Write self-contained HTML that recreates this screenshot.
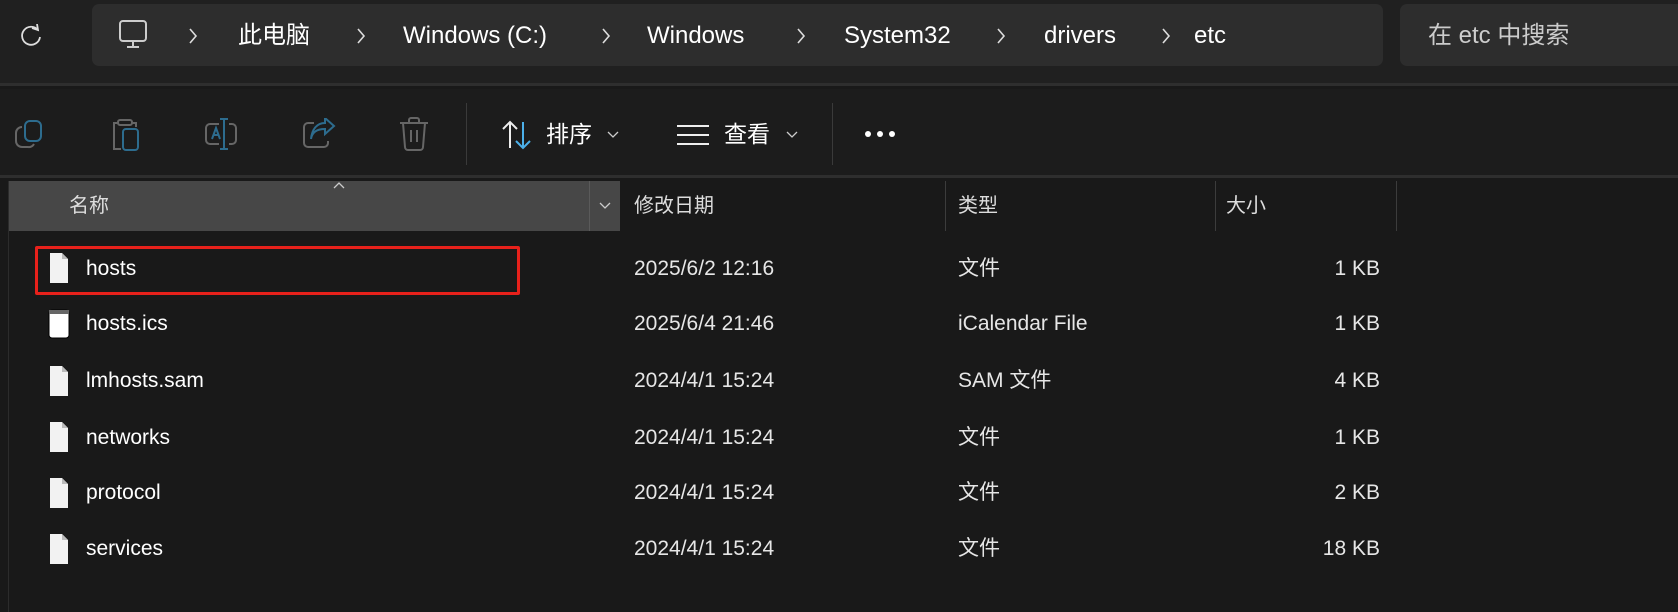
<!DOCTYPE html>
<html><head><meta charset="utf-8"><style>
*{margin:0;padding:0;box-sizing:border-box}
body{width:1678px;height:612px;overflow:hidden;background:#191919;font-family:"Segoe UI","Liberation Sans","Noto Sans CJK SC",sans-serif;color:#fff;position:relative}
.a{position:absolute;white-space:nowrap;line-height:30px}
.top{left:0;top:0;width:1678px;height:86px;background:#202020;border-bottom:3px solid #2e2e2e}
.addr{left:92px;top:4px;width:1291px;height:62px;background:#2d2d2d;border-radius:7px}
.search{left:1400px;top:4px;width:290px;height:62px;background:#2d2d2d;border-radius:7px}
.bc{font-size:24px;top:21px;color:#fff}
.tb{left:0;top:89px;width:1678px;height:89px;background:#1c1c1c;border-bottom:3px solid #2e2e2e}
.sep{width:1px;height:62px;top:103px;background:#3a3a3a}
.hdr{top:191px;font-size:20px;color:#ddd}
.vd{top:181px;width:1px;height:50px;background:#3c3c3c}
.row{font-size:21px;color:#fff}
.dt{font-size:21px;color:#e6e6e6}
</style></head><body>
<div class="a top"></div>
<svg class="a" style="left:18px;top:24px" width="26" height="26" viewBox="0 0 26 26"><path d="M20 6 A9 9 0 1 0 22 13" fill="none" stroke="#ddd" stroke-width="1.8"/><path d="M14 4 L20 6 L19 0" fill="none" stroke="#ddd" stroke-width="1.8"/></svg>
<div class="a addr"></div>
<svg class="a" style="left:118px;top:19px" width="30" height="32" viewBox="0 0 30 32"><rect x="2" y="2" width="26" height="20" rx="3" fill="none" stroke="#ccc" stroke-width="2"/><path d="M15 22v5M9 28h12" stroke="#ccc" stroke-width="2"/></svg>
<svg width="0" height="0" style="position:absolute"><defs>
<symbol id="c" viewBox="0 0 10 16"><path d="M2 1 L8 8 L2 15" fill="none" stroke="#ddd" stroke-width="1.6"/></symbol>
<symbol id="d" viewBox="0 0 12 8"><path d="M1 1 L6 6 L11 1" fill="none" stroke="#ccc" stroke-width="1.3"/></symbol>
<symbol id="f" viewBox="0 0 18 30"><path d="M0 0 h12 l6 6 v24 h-18z" fill="#f2f2f2"/><path d="M12 0 v6 h6" fill="#bbb"/></symbol>
</defs></svg>
<svg class="a" style="left:188px;top:28px" width="10" height="16"><use href="#c"/></svg>
<div class="a bc" style="left:238px">此电脑</div>
<svg class="a" style="left:356px;top:28px" width="10" height="16"><use href="#c"/></svg>
<div class="a bc" style="left:403px">Windows (C:)</div>
<svg class="a" style="left:601px;top:28px" width="10" height="16"><use href="#c"/></svg>
<div class="a bc" style="left:647px">Windows</div>
<svg class="a" style="left:796px;top:28px" width="10" height="16"><use href="#c"/></svg>
<div class="a bc" style="left:844px">System32</div>
<svg class="a" style="left:996px;top:28px" width="10" height="16"><use href="#c"/></svg>
<div class="a bc" style="left:1044px">drivers</div>
<svg class="a" style="left:1161px;top:28px" width="10" height="16"><use href="#c"/></svg>
<div class="a bc" style="left:1194px">etc</div>
<div class="a search"></div>
<div class="a bc" style="left:1428px;color:#ccc">在 etc 中搜索</div>
<div class="a tb"></div>
<svg class="a" style="left:14px;top:119px" width="32" height="32" viewBox="0 0 32 32"><path d="M8 8 A6 6 0 0 0 2 14 v8 a6 6 0 0 0 6 6 h6 a6 6 0 0 0 6-3" fill="none" stroke="#666" stroke-width="2"/><rect x="11" y="2" width="16" height="20" rx="5" fill="none" stroke="#2d6c8e" stroke-width="2"/></svg>
<svg class="a" style="left:110px;top:117px" width="32" height="36" viewBox="0 0 32 36"><path d="M8 6 H4 v26 h7 M22 6 h4 v4" fill="none" stroke="#666" stroke-width="2"/><rect x="8" y="3" width="14" height="5" rx="2" fill="none" stroke="#666" stroke-width="2"/><rect x="13" y="12" width="15" height="21" rx="3" fill="none" stroke="#2d6c8e" stroke-width="2"/></svg>
<svg class="a" style="left:204px;top:117px" width="34" height="34" viewBox="0 0 34 34"><path d="M15 7 H6 a4 4 0 0 0-4 4 v12 a4 4 0 0 0 4 4 h9 M25 7 h3 a4 4 0 0 1 4 4 v12 a4 4 0 0 1-4 4 h-3" fill="none" stroke="#666" stroke-width="2"/><path d="M20 2 v30 M16 2 h8 M16 32 h8 M8 22 l4-11 l4 11 M9.5 18 h5" fill="none" stroke="#2d6c8e" stroke-width="2"/></svg>
<svg class="a" style="left:302px;top:118px" width="34" height="32" viewBox="0 0 34 32"><path d="M12 5 H6 a4 4 0 0 0-4 4 v16 a4 4 0 0 0 4 4 h16 a4 4 0 0 0 4-4 v-2" fill="none" stroke="#666" stroke-width="2"/><path d="M9 21 c1-7 6-10 14-10 v5 l9-8 l-9-8 v5 c-8 0-13 6-14 16z" fill="none" stroke="#2d6c8e" stroke-width="2"/></svg>
<svg class="a" style="left:398px;top:117px" width="32" height="34" viewBox="0 0 32 34"><path d="M2 6 h28 M11 6 V3 a2 2 0 0 1 2-2 h6 a2 2 0 0 1 2 2 v3 M5 6 l2 24 a3 3 0 0 0 3 3 h12 a3 3 0 0 0 3-3 l2-24 M13 13 v12 M19 13 v12" fill="none" stroke="#666" stroke-width="2"/></svg>
<div class="a sep" style="left:466px"></div>
<svg class="a" style="left:500px;top:120px" width="34" height="30" viewBox="0 0 34 30"><path d="M10 28 V2 M3 9 l7-7 l7 7" fill="none" stroke="#eee" stroke-width="2"/><path d="M23 2 v26 M16 21 l7 7 l7-7" fill="none" stroke="#4cb0ea" stroke-width="2"/></svg>
<div class="a" style="left:546px;top:119px;font-size:23px">排序</div>
<svg class="a" style="left:607px;top:131px" width="12" height="8"><use href="#d"/></svg>
<svg class="a" style="left:676px;top:124px" width="34" height="22" viewBox="0 0 34 22"><path d="M1 2 h32 M1 11 h32 M1 20 h32" stroke="#eee" stroke-width="2"/></svg>
<div class="a" style="left:724px;top:119px;font-size:23px">查看</div>
<svg class="a" style="left:786px;top:131px" width="12" height="8"><use href="#d"/></svg>
<div class="a sep" style="left:832px"></div>
<svg class="a" style="left:864px;top:129px" width="34" height="10"><circle cx="4" cy="5" r="3" fill="#fff"/><circle cx="16" cy="5" r="3" fill="#fff"/><circle cx="28" cy="5" r="3" fill="#fff"/></svg>
<div class="a" style="left:8px;top:181px;width:1px;height:431px;background:#2c2c2c"></div>
<div class="a" style="left:9px;top:181px;width:611px;height:50px;background:#474747"></div>
<div class="a" style="left:589px;top:181px;width:1px;height:50px;background:#5a5a5a"></div>
<svg class="a" style="left:599px;top:202px" width="12" height="8"><use href="#d"/></svg>
<svg class="a" style="left:332px;top:181px" width="14" height="8" viewBox="0 0 12 8"><path d="M1 7 L6 2 L11 7" fill="none" stroke="#ccc" stroke-width="1.3"/></svg>
<div class="a hdr" style="left:69px">名称</div>
<div class="a hdr" style="left:634px">修改日期</div>
<div class="a vd" style="left:945px"></div>
<div class="a hdr" style="left:958px">类型</div>
<div class="a vd" style="left:1215px"></div>
<div class="a hdr" style="left:1226px">大小</div>
<div class="a vd" style="left:1396px"></div>
<div class="a" style="left:35px;top:246px;width:485px;height:49px;border:3px solid #e8211b;border-radius:2px"></div>
<svg class="a" style="left:50px;top:253px" width="18" height="30"><use href="#f"/></svg>
<div class="a row" style="left:86px;top:254px">hosts</div>
<div class="a dt" style="left:634px;top:254px">2025/6/2 12:16</div>
<div class="a dt" style="left:958px;top:254px">文件</div>
<div class="a dt" style="left:1300px;top:254px;width:80px;text-align:right">1 KB</div>
<svg class="a" style="left:48px;top:309px" width="22" height="30" viewBox="0 0 22 30"><rect x="1" y="1" width="20" height="28" rx="3" fill="#fff" stroke="#000"/><rect x="1" y="1" width="20" height="4" fill="#666"/></svg>
<div class="a row" style="left:86px;top:309px">hosts.ics</div>
<div class="a dt" style="left:634px;top:309px">2025/6/4 21:46</div>
<div class="a dt" style="left:958px;top:309px">iCalendar File</div>
<div class="a dt" style="left:1300px;top:309px;width:80px;text-align:right">1 KB</div>
<svg class="a" style="left:50px;top:366px" width="18" height="30"><use href="#f"/></svg>
<div class="a row" style="left:86px;top:366px">lmhosts.sam</div>
<div class="a dt" style="left:634px;top:366px">2024/4/1 15:24</div>
<div class="a dt" style="left:958px;top:366px">SAM 文件</div>
<div class="a dt" style="left:1300px;top:366px;width:80px;text-align:right">4 KB</div>
<svg class="a" style="left:50px;top:422px" width="18" height="30"><use href="#f"/></svg>
<div class="a row" style="left:86px;top:423px">networks</div>
<div class="a dt" style="left:634px;top:423px">2024/4/1 15:24</div>
<div class="a dt" style="left:958px;top:423px">文件</div>
<div class="a dt" style="left:1300px;top:423px;width:80px;text-align:right">1 KB</div>
<svg class="a" style="left:50px;top:478px" width="18" height="30"><use href="#f"/></svg>
<div class="a row" style="left:86px;top:478px">protocol</div>
<div class="a dt" style="left:634px;top:478px">2024/4/1 15:24</div>
<div class="a dt" style="left:958px;top:478px">文件</div>
<div class="a dt" style="left:1300px;top:478px;width:80px;text-align:right">2 KB</div>
<svg class="a" style="left:50px;top:534px" width="18" height="30"><use href="#f"/></svg>
<div class="a row" style="left:86px;top:534px">services</div>
<div class="a dt" style="left:634px;top:534px">2024/4/1 15:24</div>
<div class="a dt" style="left:958px;top:534px">文件</div>
<div class="a dt" style="left:1300px;top:534px;width:80px;text-align:right">18 KB</div>
</body></html>
